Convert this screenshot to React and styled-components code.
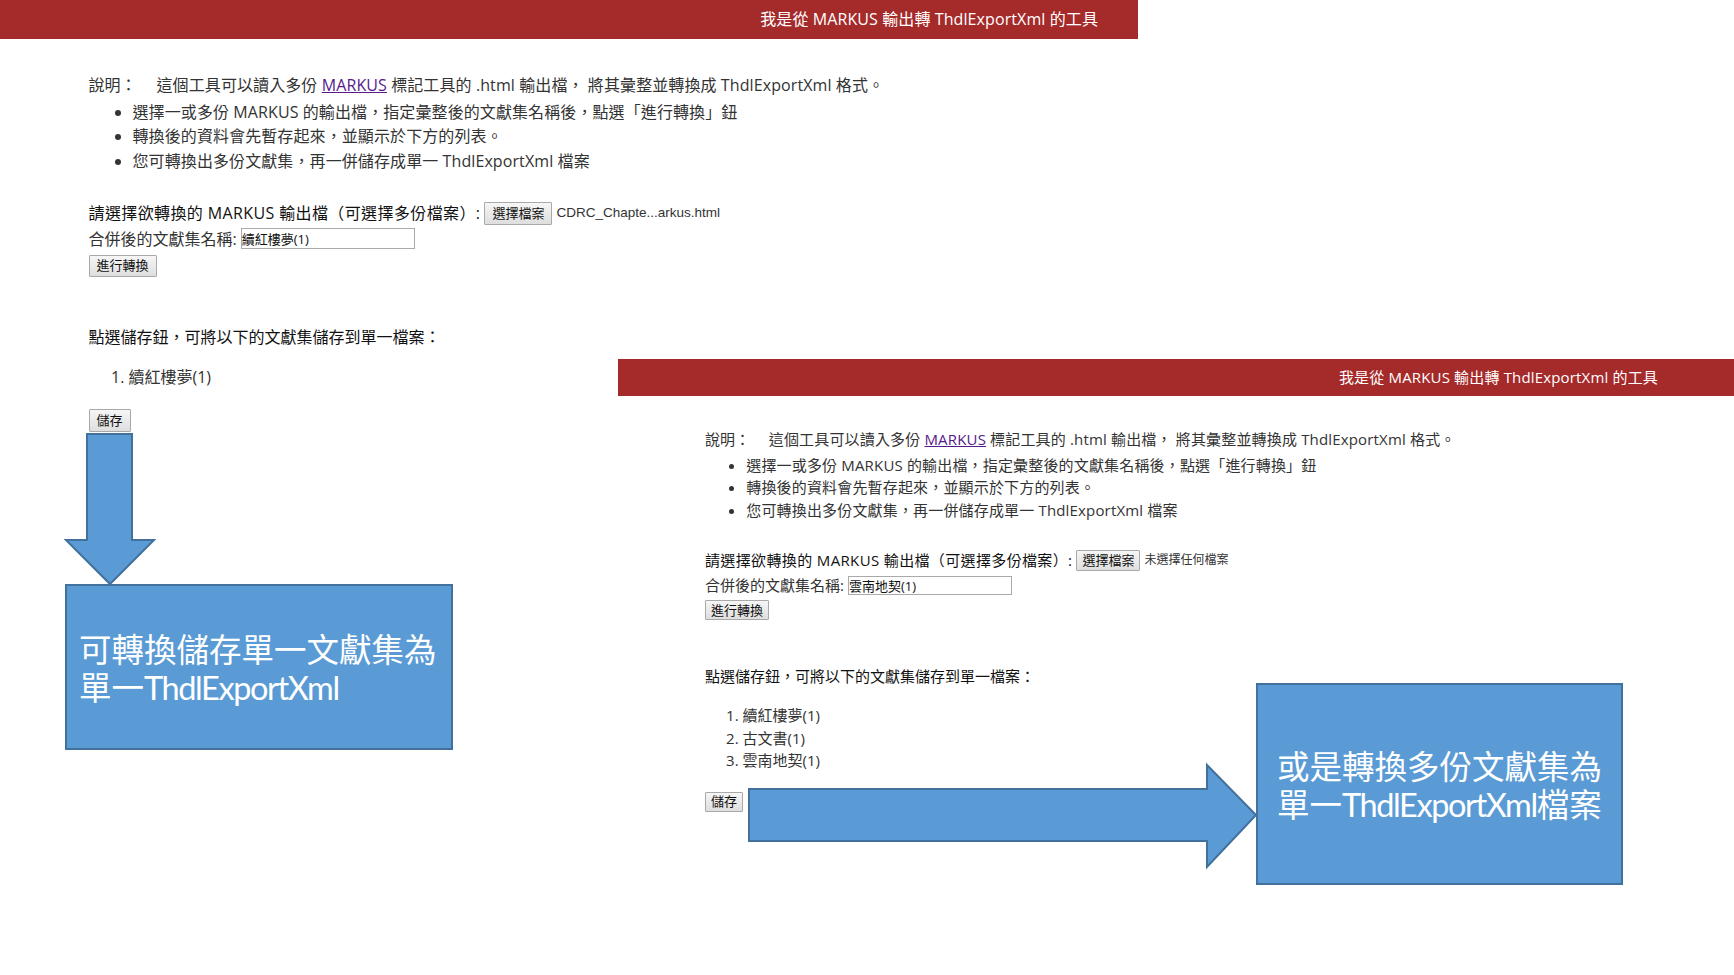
import styled, { createGlobalStyle } from "styled-components";

const FONT = '"Open Sans", "Noto Sans CJK TC", sans-serif';
const BLUE = "#5b9bd5";
const BLUE_EDGE = "#41719c";

const GlobalStyle = createGlobalStyle`
  html, body {
    margin: 0;
    padding: 0;
    background: #fff;
  }
  body {
    font-family: ${FONT};
  }
`;

const Slide = styled.div`
  position: relative;
  width: 1734px;
  height: 975px;
  overflow: hidden;
  background: #fff;
`;

// each tool screenshot sits freely on the slide
const ToolPanel = styled.section`
  --track: ${(p) => p.$track}em;
  position: absolute;
  left: ${(p) => p.$left}px;
  top: ${(p) => p.$top}px;
  width: ${(p) => p.$width}px;
  font-size: ${(p) => p.$size}px;
  line-height: ${(p) => p.$line}px;
  color: #2b2b2b;
  white-space: nowrap;
`;

const Banner = styled.header`
  display: flex;
  align-items: center;
  justify-content: flex-end;
  height: ${(p) => p.$height}px;
  padding-right: ${(p) => p.$right}px;
  background: #a52a2a;
  color: #fff;
  letter-spacing: var(--track);
`;

const Body = styled.div`
  display: flex;
  flex-direction: column;
  align-items: flex-start;
  padding-left: ${(p) => p.$left}px;
`;

const Intro = styled.div`
  margin-top: 2.14em;
  color: #333;
  letter-spacing: var(--track);
`;

const IntroLabel = styled.span`
  display: inline-block;
  width: 4.25em;
  letter-spacing: 0;
`;

const DocLink = styled.a`
  color: #551a8b;
  text-decoration: underline;
`;

const Notes = styled.ul`
  margin: ${(p) => p.$gap}px 0 0;
  padding: 0 0 0 2.75em;
  color: #333;
  letter-spacing: var(--track);
`;

const FormRow = styled.div`
  display: flex;
  align-items: center;
  gap: 4px;
  margin-top: ${(p) => p.$gap}px;
  color: ${(p) => p.$color || "#333"};
`;

const FileLabel = styled.span`
  letter-spacing: 0.024em;
`;

const GreyButton = styled.button`
  box-sizing: border-box;
  height: ${(p) => p.$height}px;
  padding: 0 ${(p) => p.$pad}px;
  border: 1px solid #a9a9a9;
  border-radius: 1px;
  background: linear-gradient(#f6f6f6, #dedede);
  color: #111;
  font-family: ${FONT};
  font-size: 13px;
  line-height: 1;
  white-space: nowrap;
`;

const FileName = styled.span`
  font-family: "Liberation Sans", "Noto Sans CJK TC", sans-serif;
  font-size: ${(p) => p.$size}px;
  color: #333;
`;

const NameInput = styled.input`
  box-sizing: border-box;
  width: ${(p) => p.$width}px;
  height: ${(p) => p.$height}px;
  padding: 0;
  border: 1px solid #aaa;
  background: #fff;
  color: #111;
  font-family: ${FONT};
  font-size: 13px;
`;

const ConvertWrap = styled.div`
  margin-top: 0.22em;
  line-height: 0;
`;

const SavePrompt = styled.div`
  margin-top: 3em;
  color: #111;
`;

const SetList = styled.ol`
  margin: ${(p) => p.$before}px 0 ${(p) => p.$after}px;
  padding: 0 0 0 2.5em;
  color: #333;
`;

const SaveWrap = styled.div`
  line-height: 0;
`;

const Callout = styled.div`
  position: absolute;
  left: ${(p) => p.$left}px;
  top: ${(p) => p.$top}px;
  box-sizing: border-box;
  width: ${(p) => p.$width}px;
  height: ${(p) => p.$height}px;
  display: flex;
  align-items: center;
  justify-content: ${(p) => (p.$center ? "center" : "flex-start")};
  padding-left: ${(p) => (p.$center ? 0 : 12)}px;
  padding-top: 3px;
  background: ${BLUE};
  border: 2px solid ${BLUE_EDGE};
  color: #fff;
  font-family: Lato, "Noto Sans CJK TC", sans-serif;
  font-size: 32.5px;
  line-height: 38px;
  white-space: nowrap;
`;

const LatinRun = styled.span`
  letter-spacing: -1.4px;
`;

const Arrow = styled.svg`
  position: absolute;
  left: ${(p) => p.$left}px;
  top: ${(p) => p.$top}px;
  overflow: visible;
`;

const panels = [
  {
    left: 0,
    top: 0,
    width: 1138,
    size: 16,
    line: 24.5,
    track: 0.006,
    bannerHeight: 39,
    bannerRight: 40,
    bodyLeft: 88.5,
    notesGap: 2.2,
    formGap: 27.4,
    inputGap: 1.4,
    listBefore: 16,
    listAfter: 19,
    buttonPad: 7,
    fileHeight: 23,
    fileSize: 13.5,
    inputWidth: 174,
    inputHeight: 21,
    convertHeight: 22,
    saveHeight: 23,
    fileName: "CDRC_Chapte...arkus.html",
    setName: "續紅樓夢(1)",
    sets: ["續紅樓夢(1)"],
  },
  {
    left: 618,
    top: 359,
    width: 1116,
    size: 15,
    line: 22.6,
    track: 0.011,
    bannerHeight: 37,
    bannerRight: 76,
    bodyLeft: 87,
    notesGap: 3,
    formGap: 28,
    inputGap: 2.2,
    listBefore: 16.5,
    listAfter: 19.5,
    buttonPad: 5,
    fileHeight: 21,
    fileSize: 12,
    inputWidth: 164,
    inputHeight: 19,
    convertHeight: 20,
    saveHeight: 20,
    fileName: "未選擇任何檔案",
    setName: "雲南地契(1)",
    sets: ["續紅樓夢(1)", "古文書(1)", "雲南地契(1)"],
  },
];

function Tool({ data }) {
  return (
    <ToolPanel
      $left={data.left}
      $top={data.top}
      $width={data.width}
      $size={data.size}
      $line={data.line}
      $track={data.track}
    >
      <Banner $height={data.bannerHeight} $right={data.bannerRight}>
        我是從 MARKUS 輸出轉 ThdlExportXml 的工具
      </Banner>
      <Body $left={data.bodyLeft}>
        <Intro>
          <IntroLabel>說明：</IntroLabel>
          這個工具可以讀入多份 <DocLink href="#">MARKUS</DocLink> 標記工具的 .html
          輸出檔， 將其彙整並轉換成 ThdlExportXml 格式。
        </Intro>
        <Notes $gap={data.notesGap}>
          <li>選擇一或多份 MARKUS 的輸出檔，指定彙整後的文獻集名稱後，點選「進行轉換」鈕</li>
          <li>轉換後的資料會先暫存起來，並顯示於下方的列表。</li>
          <li>您可轉換出多份文獻集，再一併儲存成單一 ThdlExportXml 檔案</li>
        </Notes>
        <FormRow $gap={data.formGap} $color="#111">
          <FileLabel>請選擇欲轉換的 MARKUS 輸出檔（可選擇多份檔案）:</FileLabel>
          <GreyButton $height={data.fileHeight} $pad={data.buttonPad}>
            選擇檔案
          </GreyButton>
          <FileName $size={data.fileSize}>{data.fileName}</FileName>
        </FormRow>
        <FormRow $gap={data.inputGap}>
          合併後的文獻集名稱:
          <NameInput
            $width={data.inputWidth}
            $height={data.inputHeight}
            defaultValue={data.setName}
          />
        </FormRow>
        <ConvertWrap>
          <GreyButton $height={data.convertHeight} $pad={data.buttonPad}>
            進行轉換
          </GreyButton>
        </ConvertWrap>
        <SavePrompt>點選儲存鈕，可將以下的文獻集儲存到單一檔案：</SavePrompt>
        <SetList $before={data.listBefore} $after={data.listAfter}>
          {data.sets.map((name) => (
            <li key={name}>{name}</li>
          ))}
        </SetList>
        <SaveWrap>
          <GreyButton $height={data.saveHeight} $pad={data.buttonPad}>
            儲存
          </GreyButton>
        </SaveWrap>
      </Body>
    </ToolPanel>
  );
}

export default function App() {
  return (
    <Slide>
      <GlobalStyle />
      {panels.map((panel) => (
        <Tool key={panel.left} data={panel} />
      ))}

      <Arrow $left={64} $top={433} width="92" height="152" viewBox="0 0 92 152">
        <polygon
          points="23,1 68,1 68,107 90,107 46,151 2,107 23,107"
          fill={BLUE}
          stroke={BLUE_EDGE}
          strokeWidth="2"
        />
      </Arrow>
      <Callout $left={65} $top={584} $width={388} $height={166}>
        <div>
          可轉換儲存單一文獻集為
          <br />
          單一<LatinRun>ThdlExportXml</LatinRun>
        </div>
      </Callout>

      <Arrow $left={748} $top={764} width="510" height="104" viewBox="0 0 510 104">
        <polygon
          points="1,25 459,25 459,1 508,51 459,103 459,77 1,77"
          fill={BLUE}
          stroke={BLUE_EDGE}
          strokeWidth="2"
        />
      </Arrow>
      <Callout $left={1256} $top={683} $width={367} $height={202} $center>
        <div>
          或是轉換多份文獻集為
          <br />
          單一<LatinRun>ThdlExportXml</LatinRun>檔案
        </div>
      </Callout>
    </Slide>
  );
}
